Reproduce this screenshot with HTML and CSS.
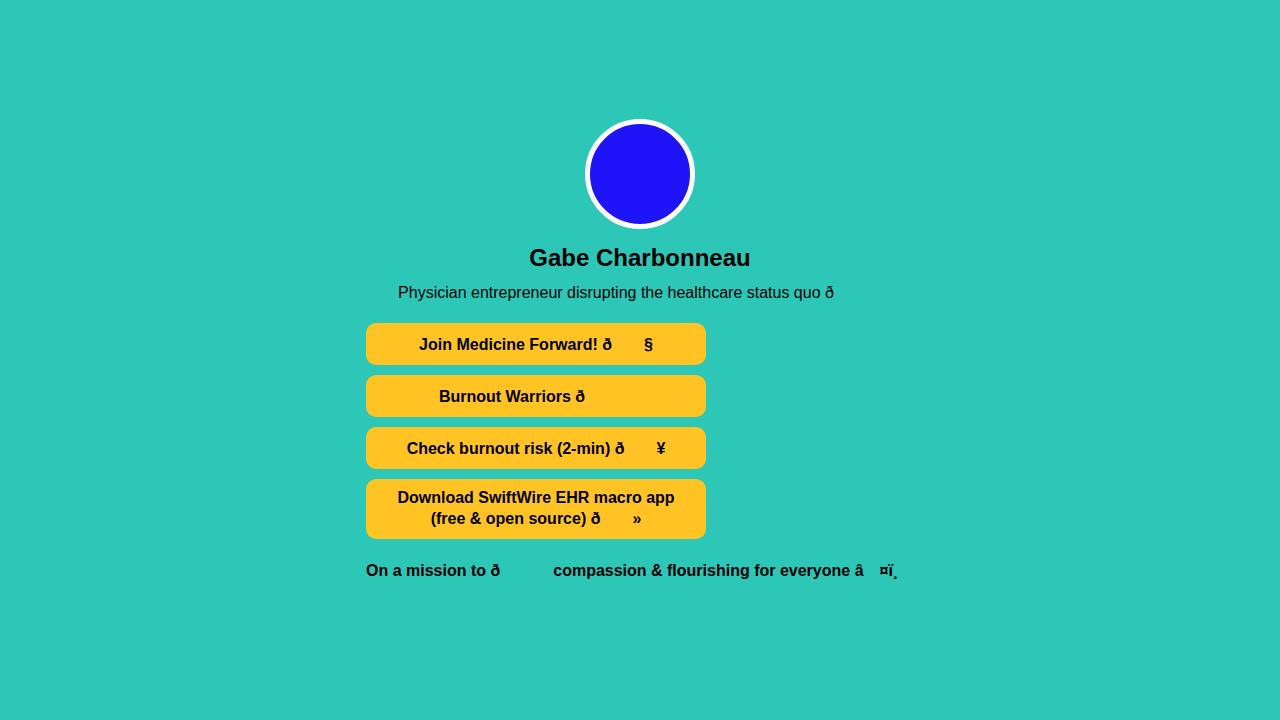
FILE: index.html
```html
<!DOCTYPE html>
<html lang="en">
<head>
<meta charset="utf-8">
<title>Gabe Charbonneau</title>
<link rel="stylesheet" href="styles.css">
</head>
<body>
<main class="wrap">
  <div class="avatar"></div>
  <h1 class="name">Gabe Charbonneau</h1>
  <p class="bio">Physician entrepreneur disrupting the healthcare status quo ð<span class="g g48"></span></p>
  <nav class="links">
    <a class="btn" href="#">Join Medicine Forward! ð<span class="g g32"></span>§</a>
    <a class="btn" href="#">Burnout Warriors ð<span class="g g48"></span></a>
    <a class="btn" href="#">Check burnout risk (2-min) ð<span class="g g32"></span>¥</a>
    <a class="btn two" href="#">Download SwiftWire EHR macro app<br>(free &amp; open source) ð<span class="g g32"></span>»</a>
  </nav>
  <p class="mission">On a mission to ð<span class="g g53"></span>compassion &amp; flourishing for everyone â<span class="g g16"></span>¤ï¸</p>
</main>
</body>
</html>
```

FILE: styles.css
```css
html, body {
  margin: 0;
  padding: 0;
}
body {
  background: #2cc7b7;
  font-family: "Liberation Sans", Arial, sans-serif;
  color: #000;
  min-height: 720px;
}
.wrap {
  width: 548px;
  margin: 0 auto;
  padding-top: 119px;
  display: flex;
  flex-direction: column;
}
.avatar {
  width: 100px;
  height: 100px;
  border: 5px solid #fff;
  border-radius: 50%;
  background: #1e14f7;
  align-self: center;
}
.name {
  margin: 15px 0 0;
  font-size: 24px;
  line-height: 28px;
  font-weight: bold;
  text-align: center;
}
.bio {
  margin: 12px 0 0;
  font-size: 16px;
  line-height: 18px;
  text-align: center;
  white-space: nowrap;
}
.g {
  display: inline-block;
  height: 1px;
}
.g16 { width: 16px; }
.g32 { width: 32px; }
.g48 { width: 48px; }
.g53 { width: 53px; }
.links {
  margin-top: 21px;
  width: 340px;
  display: flex;
  flex-direction: column;
  gap: 10px;
}
.btn {
  display: block;
  background: #ffc423;
  border-radius: 10px;
  padding: 13px 10px 11px;
  font-size: 16px;
  line-height: 18px;
  font-weight: bold;
  text-align: center;
  color: #000;
  text-decoration: none;
}
.btn.two {
  line-height: 21px;
  padding: 8px 10px 10px;
}
.mission {
  margin: 23px 0 0;
  font-size: 16px;
  line-height: 18px;
  font-weight: bold;
  white-space: nowrap;
}
```
